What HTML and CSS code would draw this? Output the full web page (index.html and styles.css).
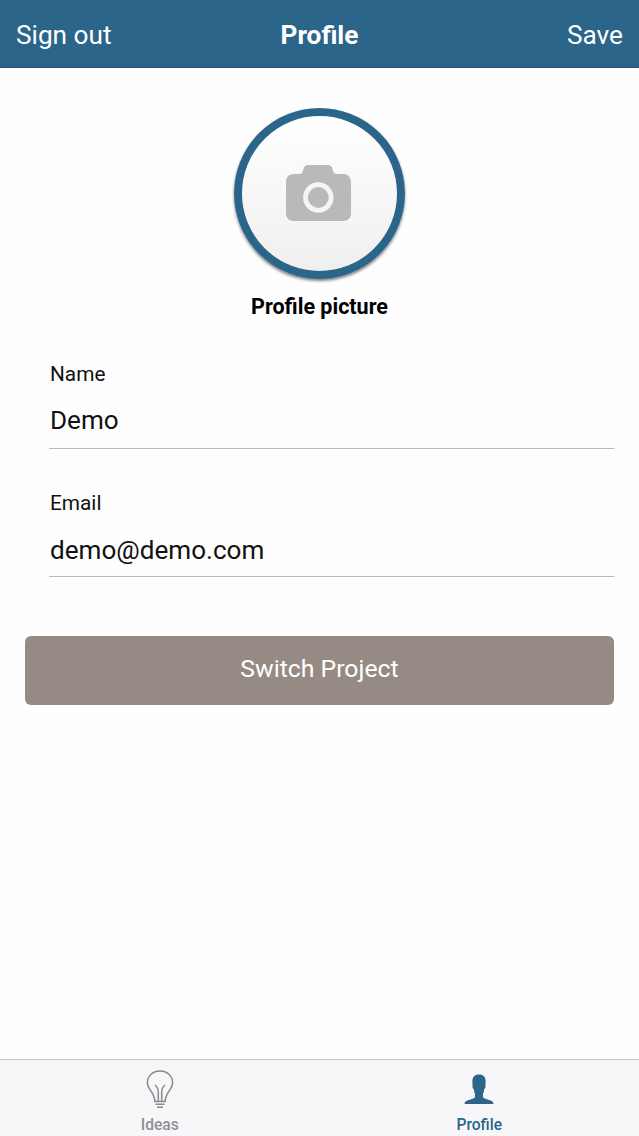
FILE: index.html
```html
<!DOCTYPE html>
<html lang="en">
<head>
    <meta charset="utf-8">
    <title>Profile</title>
    <link rel="stylesheet" href="styles.css">
</head>
<body>
    <header class="navbar">
        <a class="nav-link">Sign out</a>
        <h1 class="nav-title">Profile</h1>
        <a class="nav-link nav-right">Save</a>
    </header>

    <main class="content">
        <div class="picture">
            <div class="avatar">
                <svg class="camera" viewBox="0 0 65 56">
                    <path fill="#b9b9ba" d="M8 9h5.500c2 0 3-1 3.500-3l.3-1.500C18 1.500 19.500 0 22 0h20c2.500 0 4 1.500 4.700 4.500L47 6c.5 2 1.500 3 3.500 3H57c5 0 8 3 8 8v31c0 5-3 8-8 8H8c-5 0-8-3-8-8V17c0-5 3-8 8-8z"/>
                    <circle cx="32.300" cy="32.500" r="12.800" fill="none" stroke="#f5f5f5" stroke-width="4.800"/>
                </svg>
            </div>
            <div class="picture-label">Profile picture</div>
        </div>

        <div class="field">
            <div class="field-label">Name</div>
            <div class="field-value">Demo</div>
        </div>
        <div class="field">
            <div class="field-label">Email</div>
            <div class="field-value">demo@demo.com</div>
        </div>

        <button class="switch-btn">Switch Project</button>
    </main>

    <nav class="tabbar">
        <a class="tab">
            <svg class="tab-icon" viewBox="0 0 40 40" fill="none" stroke="#8a8a8e" stroke-width="1.500">
                <path d="M14.800 31.500c0-4-1.400-7-3.900-10.500-1.800-2.500-3.500-4.500-3.500-8C7.400 5.500 13 1 20 1s12.600 4.500 12.600 12c0 3.500-1.700 5.500-3.500 8-2.500 3.500-3.900 6.500-3.900 10.500z"/>
                <path d="M18.300 31v-8.500c0-3-1-5.500-3.300-7.500M21.700 31v-8.500c0-3 1-5.500 3.300-7.500M15.500 34.300h9M17 37.300h6"/>
            </svg>
            <span class="tab-label">Ideas</span>
        </a>
        <a class="tab active">
            <svg class="tab-icon" viewBox="0 0 40 40">
                <path fill="#2b6589" d="M20 4.500c4.300 0 6.600 2.500 6.600 6.500 0 1.500 0 2.500-.2 3.800.5 1.500-.1 3.700-1.200 4.500-.2 1.900-.6 3.400-1.200 4.700v3c.4 1.400 2.500 1.800 5.300 2.700 3.500 1 5.200 1.800 5.200 4.300h-29c0-2.500 1.700-3.300 5.200-4.300 2.800-.9 4.900-1.300 5.300-2.700v-3c-.6-1.300-1-2.800-1.200-4.700-1.100-.8-1.700-3-1.200-4.500-.2-1.300-.2-2.300-.2-3.800 0-4 2.300-6.500 6.600-6.500z"/>
            </svg>
            <span class="tab-label">Profile</span>
        </a>
    </nav>
</body>
</html>
```

FILE: styles.css
```css
* {
    box-sizing: border-box;
}

body {
    margin: 0;
    height: 1136px;
    display: flex;
    flex-direction: column;
    font-family: Roboto, "Liberation Sans", sans-serif;
    background-color: #fefefe;
    color: #111;
}

.navbar {
    height: 68px;
    display: grid;
    grid-template-columns: 1fr auto 1fr;
    align-items: center;
    padding: 2px 16px 0;
    background-color: #2b6589;
    border-bottom: 1px solid #24516e;
    color: #fff;
}

.nav-link {
    font-size: 26.2px;
}

.nav-right {
    text-align: right;
}

.nav-title {
    margin: 0;
    font-size: 26.2px;
    font-weight: bold;
}

.content {
    flex: 1;
    padding: 40px 25px 0;
}

.picture {
    display: flex;
    flex-direction: column;
    align-items: center;
    height: 244px;
}

.avatar {
    width: 171px;
    height: 171px;
    display: flex;
    align-items: center;
    justify-content: center;
    border: 8px solid #2b6589;
    border-radius: 50%;
    background: linear-gradient(#fff, #f8f8f9 45%, #efeff0);
    box-shadow: 0 2px 3px rgba(0, 0, 0, 0.5);
}

.camera {
    width: 65px;
    height: 56px;
    margin: 0 3px 2px 0;
}

.picture-label {
    margin-top: 15px;
    font-size: 21.5px;
    line-height: 26px;
    font-weight: bold;
    color: #000;
}

.field {
    height: 97px;
    margin: 0 0 32px 24px;
    padding-top: 8px;
    border-bottom: 1px solid #b9b9bd;
}

.field-label {
    padding-left: 1px;
    font-size: 20.8px;
    line-height: 28px;
}

.field-value {
    margin-top: 15px;
    padding-left: 1px;
    font-size: 26.1px;
    line-height: 34px;
}

.field + .field {
    height: 96px;
}

.field + .field .field-value {
    margin-top: 16px;
}

.switch-btn {
    display: block;
    width: 100%;
    height: 69px;
    margin-top: 59px;
    padding: 0 0 4px;
    border: none;
    border-radius: 6px;
    background-color: #968b84;
    color: #fff;
    font-family: inherit;
    font-size: 24.8px;
}

.tabbar {
    height: 77px;
    display: flex;
    border-top: 1px solid #c6c6ca;
    background-color: #f7f7f9;
}

.tab {
    flex: 1;
    display: flex;
    flex-direction: column;
    align-items: center;
    padding-top: 10px;
    color: #8f8f94;
}

.tab-icon {
    width: 40px;
    height: 40px;
}

.tab-label {
    margin-top: 5px;
    font-size: 15.6px;
    line-height: 20px;
    font-weight: 500;
}

.active {
    color: #2b6589;
}
```
